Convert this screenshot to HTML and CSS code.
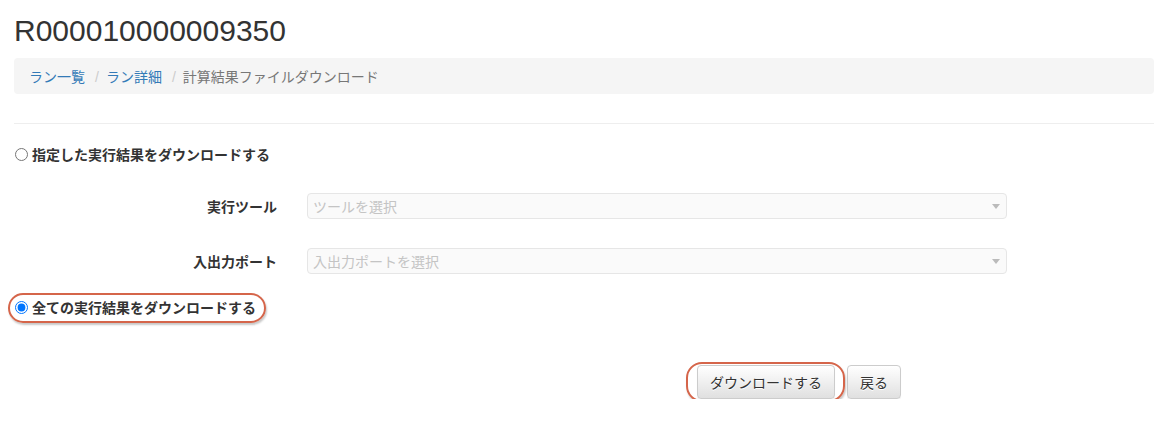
FILE: index.html
```html
<!DOCTYPE html>
<html lang="ja">
<head>
<meta charset="utf-8">
<title>計算結果ファイルダウンロード</title>
<link rel="stylesheet" href="styles.css">
</head>
<body>
<div class="container">
  <h1 class="title">R000010000009350</h1>
  <ol class="breadcrumb">
    <li><a href="#">ラン一覧</a></li>
    <li><a href="#">ラン詳細</a></li>
    <li class="active">計算結果ファイルダウンロード</li>
  </ol>
  <hr class="divider">
  <form class="download-form">
    <label class="radio-row">
      <input type="radio" name="target" class="radio">
      <span>指定した実行結果をダウンロードする</span>
    </label>
    <div class="field-row first">
      <div class="field-label">実行ツール</div>
      <div class="select disabled">
        <span class="placeholder">ツールを選択</span>
        <span class="arrow"></span>
      </div>
    </div>
    <div class="field-row">
      <div class="field-label">入出力ポート</div>
      <div class="select disabled">
        <span class="placeholder">入出力ポートを選択</span>
        <span class="arrow"></span>
      </div>
    </div>
    <label class="radio-row second">
      <input type="radio" name="target" class="radio" checked>
      <span>全ての実行結果をダウンロードする</span>
      <span class="mark mark-radio"></span>
    </label>
    <div class="actions">
      <div class="btn-wrap">
        <button type="button" class="btn">ダウンロードする</button>
        <span class="mark mark-btn"></span>
      </div>
      <button type="button" class="btn">戻る</button>
    </div>
  </form>
</div>
</body>
</html>
```
FILE: styles.css
```css
html, body {
  margin: 0;
  padding: 0;
  background: #fff;
}
body {
  font-family: "Liberation Sans", "Noto Sans CJK JP", sans-serif;
  font-size: 14px;
  line-height: 20px;
  color: #333;
}
.container {
  width: 1140px;
  padding: 0 14px;
}
.title {
  margin: 14px 0 0;
  font-family: "Liberation Sans", Arial, sans-serif;
  font-size: 30px;
  font-weight: normal;
  line-height: 33px;
  color: #333;
}
.breadcrumb {
  display: flex;
  list-style: none;
  margin: 11px 0 0;
  padding: 8px 15px;
  height: 20px;
  background: #f5f5f5;
  border-radius: 4px;
  font-family: "Noto Sans CJK JP", sans-serif;
}
.breadcrumb li + li::before {
  content: "/";
  color: #ccc;
  padding: 0 7px 0 10px;
  font-family: "Liberation Sans", sans-serif;
}
.breadcrumb a {
  color: #337ab7;
  text-decoration: none;
}
.breadcrumb .active {
  color: #777;
}
.divider {
  margin: 29px 0 0;
  border: 0;
  border-top: 1px solid #eee;
  height: 0;
}
.download-form {
  font-family: "Noto Sans CJK JP", sans-serif;
}
.radio-row {
  position: relative;
  display: flex;
  align-items: center;
  margin-top: 20px;
  font-weight: bold;
  height: 20px;
}
.radio-row.second {
  margin-top: 23px;
  width: max-content;
}
.radio {
  width: 13px;
  height: 13px;
  margin: 1px 4px 0 1px;
}
.field-row {
  display: flex;
  align-items: center;
  gap: 30px;
  margin-top: 29px;
}
.field-label {
  width: 263px;
  text-align: right;
  font-weight: bold;
}
.select {
  position: relative;
  box-sizing: border-box;
  width: 700px;
  height: 26px;
  padding: 0 5px;
  border: 1px solid #e6e6e6;
  border-radius: 4px;
  background: #fafafa;
  display: flex;
  align-items: center;
}
.placeholder {
  color: #c4c4c4;
}
.arrow {
  position: absolute;
  right: 6px;
  top: 10px;
  width: 0;
  height: 0;
  border-left: 4px solid transparent;
  border-right: 4px solid transparent;
  border-top: 5px solid #bbb;
}
.actions {
  display: flex;
  gap: 12px;
  margin-top: 48px;
  padding-left: 683px;
}
.btn-wrap {
  position: relative;
}
.btn {
  font-family: "Noto Sans CJK JP", sans-serif;
  font-size: 14px;
  line-height: 20px;
  color: #333;
  padding: 6px 12px;
  border: 1px solid #ccc;
  border-radius: 4px;
  background: linear-gradient(to bottom, #fff 0, #e0e0e0 100%);
  text-shadow: 0 1px 0 #fff;
  box-shadow: inset 0 1px 0 rgba(255, 255, 255, .15), 0 1px 1px rgba(0, 0, 0, .075);
  cursor: pointer;
}
.mark {
  position: absolute;
  box-sizing: border-box;
  border: 2px solid #d5654a;
  border-radius: 16px;
  box-shadow: 1px 2px 2px rgba(0, 0, 0, .22);
  pointer-events: none;
}
.mark-radio {
  left: -6px;
  top: -4px;
  width: 258px;
  height: 30px;
}
.mark-btn {
  left: -11px;
  top: -3px;
  width: 159px;
  height: 40px;
}
```
